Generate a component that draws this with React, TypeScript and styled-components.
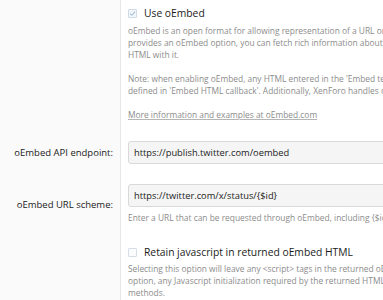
import styled, { createGlobalStyle } from "styled-components";

const GlobalStyle = createGlobalStyle`
  html, body {
    margin: 0;
    padding: 0;
    overflow: hidden;
    background: #ffffff;
  }
  body {
    font-family: "Open Sans", "Noto Sans", sans-serif;
    color: #141414;
  }
`;

const Page = styled.div`
  width: 383px;
  height: 300px;
  overflow: hidden;
  display: flex;
  flex-direction: column;
  background: linear-gradient(to right, #fafafa 0, #fafafa 120px, #e7e7e7 120px, #e7e7e7 121px, #ffffff 121px);
`;

const FormRow = styled.div<{ $top?: number; $bottom?: number }>`
  display: grid;
  grid-template-columns: 121px 600px;
  padding-top: ${(p) => p.$top ?? 10}px;
  padding-bottom: ${(p) => p.$bottom ?? 10}px;
`;

const RowLabel = styled.div`
  display: flex;
  align-items: center;
  justify-content: flex-end;
  padding-right: 8px;
  font-size: 9.5px;
  color: #1b1b1b;
  white-space: nowrap;
`;

const RowBody = styled.div`
  padding-left: 7px;
  display: flex;
  flex-direction: column;
`;

const CheckLine = styled.label`
  display: flex;
  align-items: center;
  gap: 7px;
  height: 14px;
  font-size: 10.3px;
  color: #1b1b1b;
  white-space: nowrap;
`;

const Box = styled.span<{ $checked?: boolean }>`
  box-sizing: border-box;
  width: 9px;
  height: 9px;
  border: 1px solid ${(p) => (p.$checked ? "#cfdbe7" : "#d6dde4")};
  background: ${(p) => (p.$checked ? "#f2f6fa" : "#fbfcfd")};
  border-radius: 1px;
  display: flex;
  align-items: center;
  justify-content: center;
`;

const Explain = styled.div<{ $gap?: number }>`
  margin-top: ${(p) => p.$gap ?? 5}px;
  font-size: 8.4px;
  line-height: 12px;
  color: #8c8c8c;
  white-space: nowrap;
`;

const Para = styled.p`
  margin: 0 0 12px 0;
  &:last-child {
    margin-bottom: 0;
  }
`;

const MoreLink = styled.a`
  color: #8c8c8c;
  text-decoration: underline;
  text-decoration-color: #b5b5b5;
`;

const TextInput = styled.input`
  box-sizing: border-box;
  width: 420px;
  height: 23px;
  padding: 0 5px;
  border: 1px solid #d9d9d9;
  border-radius: 3px;
  background: #f5f5f5;
  font-family: "Open Sans", "Noto Sans", sans-serif;
  font-size: 9.3px;
  color: #1b1b1b;
  outline: none;
`;

const Checkbox = ({ checked, label }: { checked?: boolean; label: string }) => (
  <CheckLine>
    <Box $checked={checked}>
      {checked && (
        <svg width="7" height="7" viewBox="0 0 7 7">
          <path d="M1 3.6 L2.8 5.3 L6 1.6" fill="none" stroke="#a9c2db" strokeWidth="1.1" />
        </svg>
      )}
    </Box>
    {label}
  </CheckLine>
);

export default function App() {
  return (
    <>
      <GlobalStyle />
      <Page>
        <FormRow $top={6}>
          <RowLabel />
          <RowBody>
            <Checkbox checked label="Use oEmbed" />
            <Explain>
              <Para>
                oEmbed is an open format for allowing representation of a URL on third party sites. If the site
                <br />
                provides an oEmbed option, you can fetch rich information about a URL and display the embedded
                <br />
                HTML with it.
              </Para>
              <Para>
                Note: when enabling oEmbed, any HTML entered in the 'Embed template' will be ignored unless it is
                <br />
                defined in 'Embed HTML callback'. Additionally, XenForo handles oEmbed requests through the proxy.
              </Para>
              <Para>
                <MoreLink href="#">More information and examples at oEmbed.com</MoreLink>
              </Para>
            </Explain>
          </RowBody>
        </FormRow>

        <FormRow>
          <RowLabel>oEmbed API endpoint:</RowLabel>
          <RowBody>
            <TextInput defaultValue="https://publish.twitter.com/oembed" />
          </RowBody>
        </FormRow>

        <FormRow>
          <RowLabel>oEmbed URL scheme:</RowLabel>
          <RowBody>
            <TextInput defaultValue="https://twitter.com/x/status/{$id}" />
            <Explain>
              Enter a URL that can be requested through oEmbed, including {"{$id}"} to represent the media ID.
            </Explain>
          </RowBody>
        </FormRow>

        <FormRow $top={11}>
          <RowLabel />
          <RowBody>
            <Checkbox label="Retain javascript in returned oEmbed HTML" />
            <Explain $gap={4}>
              Selecting this option will leave any &lt;script&gt; tags in the returned oEmbed HTML. Without this
              <br />
              option, any Javascript initialization required by the returned HTML must be handled by other
              <br />
              methods.
            </Explain>
          </RowBody>
        </FormRow>
      </Page>
    </>
  );
}
